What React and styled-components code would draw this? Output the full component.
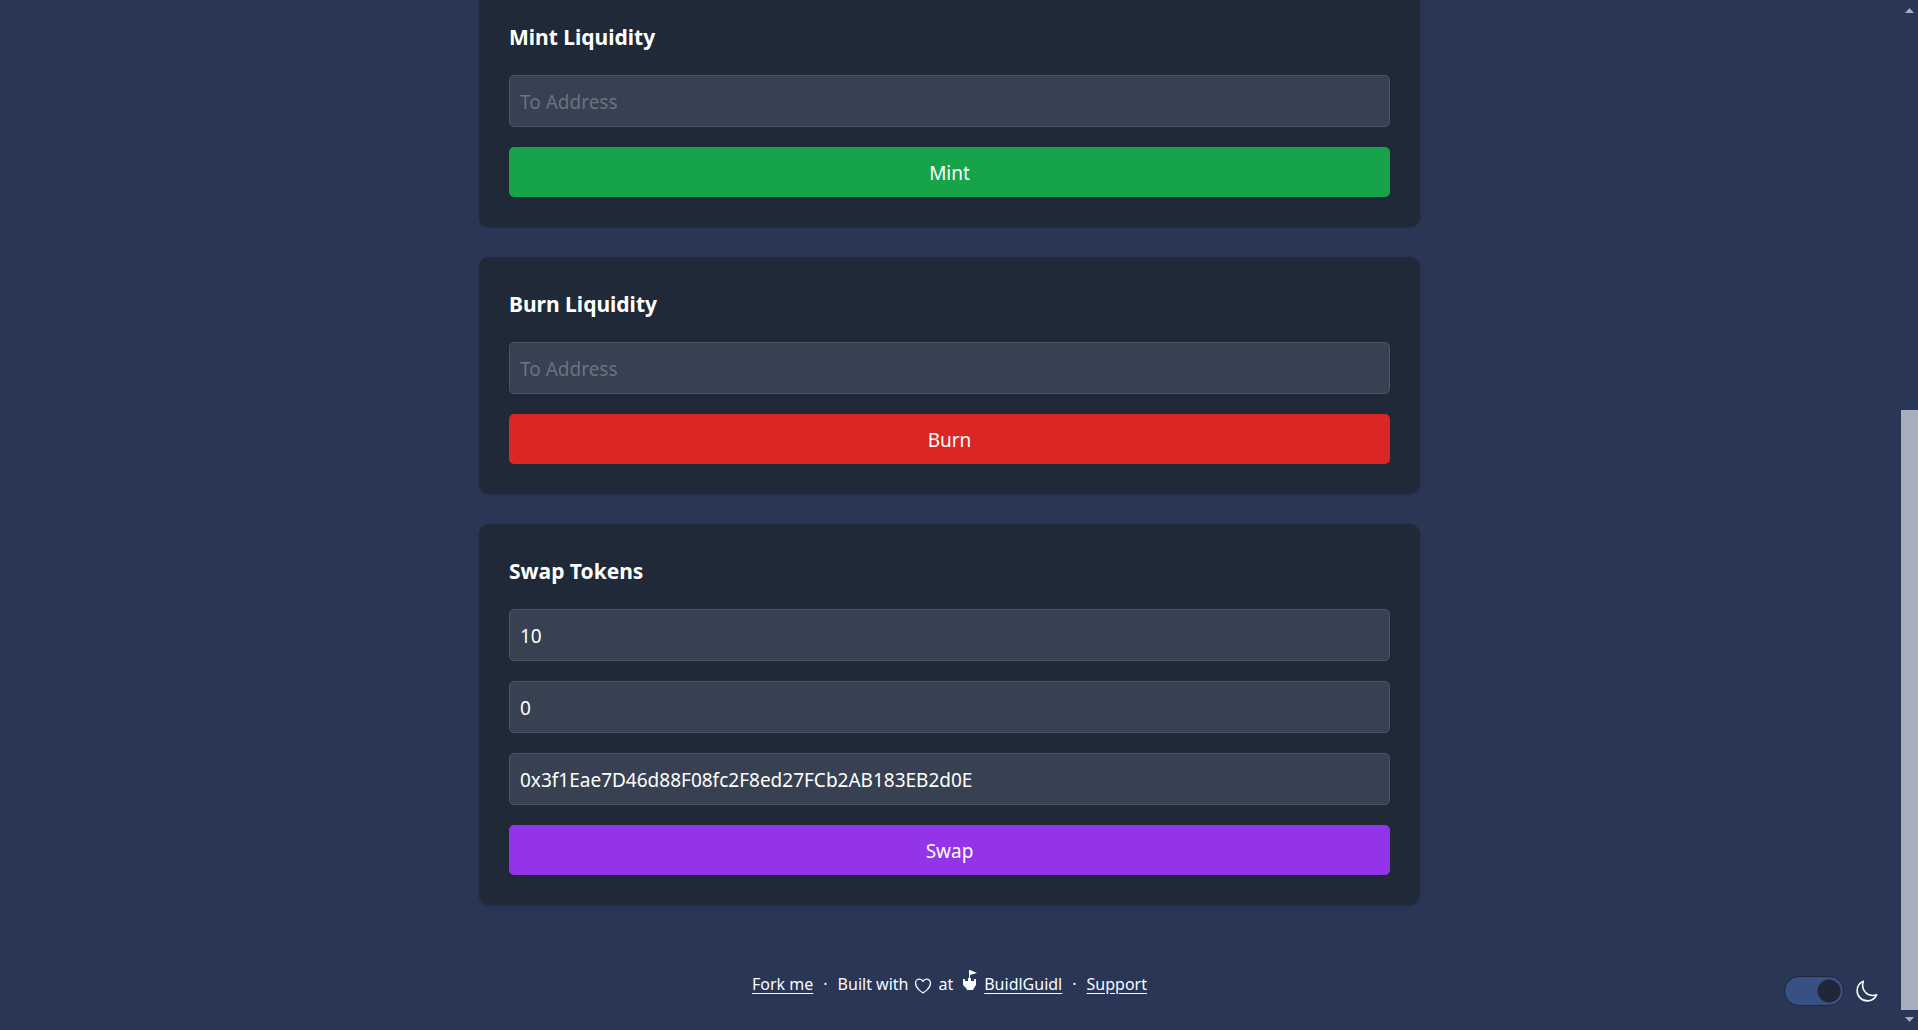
import React, { useState } from "react";
import styled, { createGlobalStyle } from "styled-components";

const GlobalStyle = createGlobalStyle`
  *, *::before, *::after { box-sizing: border-box; }
  body {
    margin: 0;
    background: #2a3655;
    color: #f9fbff;
    font-family: "Segoe UI", "Noto Sans", "Open Sans", sans-serif;
    font-size: 19px;
    line-height: 30px;
  }
`;

const Shell = styled.div`
  display: flex;
  height: 100vh;
  overflow: hidden;
`;

const Page = styled.div`
  flex: 1;
  min-width: 0;
  display: flex;
  flex-direction: column;
  justify-content: flex-end;
  align-items: center;
  overflow: hidden;
`;

const Cards = styled.main`
  width: 100%;
  max-width: 941px;
  display: flex;
  flex-direction: column;
  flex-shrink: 0;
  gap: 30px;
`;

const Card = styled.form`
  display: flex;
  flex-direction: column;
  gap: 20px;
  padding: 30px;
  border-radius: 10px;
  background: #1f2937;
  box-shadow: 0 1px 3px rgba(0, 0, 0, 0.1), 0 1px 2px -1px rgba(0, 0, 0, 0.1);
`;

const CardTitle = styled.h2`
  margin: 0;
  color: #fff;
  font-size: 21px;
  font-weight: 700;
  line-height: 35px;
`;

const Field = styled.input`
  width: 100%;
  height: 52px;
  padding: 2px 10px 0;
  border: 1px solid #4b5563;
  border-radius: 5px;
  background: #374151;
  color: #fff;
  font: inherit;
  outline: none;
  &::placeholder {
    color: #6b7280;
    opacity: 1;
  }
  &:focus { border-color: #6b7280; }
`;

const Action = styled.button`
  height: 50px;
  padding: 2px 20px 0;
  border: 0;
  border-radius: 5px;
  background: ${(p) => p.$color};
  color: #fff;
  font: inherit;
  cursor: pointer;
`;

const Footer = styled.footer`
  flex-shrink: 0;
  display: flex;
  align-items: center;
  justify-content: center;
  gap: 10px;
  padding: 65px 0 32px;
  font-size: 16px;
  line-height: 25px;
`;

const FooterLink = styled.a`
  color: inherit;
  text-decoration: underline;
  text-underline-offset: 3px;
`;

const Credit = styled.div`
  display: flex;
  align-items: center;
  gap: 5px;
`;

const BuilderLink = styled(FooterLink)`
  margin-left: 2px;
`;

const HeartMark = styled.svg`
  width: 20px;
  height: 20px;
  margin-top: 4px;
`;

const ThemeSwitch = styled.div`
  position: fixed;
  right: 39px;
  bottom: 24px;
  display: flex;
  align-items: center;
  gap: 10px;
`;

const Toggle = styled.input`
  appearance: none;
  width: 60px;
  height: 30px;
  margin: 0;
  border: 1px solid #212638;
  border-radius: 15px;
  background:
    radial-gradient(circle at ${(p) => (p.checked ? "44px" : "14px")} 14px, #212638 11px, transparent 12px),
    #385183;
  cursor: pointer;
`;

const MoonLabel = styled.label`
  display: flex;
  cursor: pointer;
`;

const ScrollTrack = styled.div`
  width: 19px;
  padding-left: 2px;
  display: flex;
  flex-direction: column;
  align-items: center;
  color: #a6adbb;
`;

const ScrollArrow = styled.svg`
  width: 17px;
  height: 20px;
  flex-shrink: 0;
`;

const ScrollSpace = styled.div`
  flex: 390;
`;

const ScrollThumb = styled.div`
  flex: 600;
  width: 100%;
  background: #a6adbb;
`;

const HeartIcon = () => (
  <HeartMark viewBox="0 0 24 24" fill="none" stroke="currentColor" strokeWidth="1.5" strokeLinecap="round" strokeLinejoin="round" aria-hidden="true">
    <path d="M21 8.25c0-2.485-2.099-4.5-4.688-4.5-1.935 0-3.597 1.126-4.312 2.733-.715-1.607-2.377-2.733-4.313-2.733C5.1 3.75 3 5.765 3 8.25c0 7.22 9 12 9 12s9-4.78 9-12Z" />
  </HeartMark>
);

const CastleIcon = () => (
  <svg width="14" height="28" viewBox="0 0 14 28" fill="currentColor" aria-hidden="true">
    <path d="M6 0h1l7 3-7 2v3h1v3h3V9h2v6l-2 3-1 2H4l-1-2-3-3V9h2v2h3V8h1z" />
  </svg>
);

const MoonIcon = () => (
  <svg width="25" height="25" viewBox="0 0 24 24" fill="none" stroke="currentColor" strokeWidth="1.5" strokeLinecap="round" strokeLinejoin="round" aria-hidden="true">
    <path d="M21.752 15.002A9.72 9.72 0 0 1 18 15.75c-5.385 0-9.75-4.365-9.75-9.75 0-1.33.266-2.597.748-3.752A9.753 9.753 0 0 0 3 11.25C3 16.635 7.365 21 12.75 21a9.753 9.753 0 0 0 9.002-5.998Z" />
  </svg>
);

const sections = [
  { title: "Mint Liquidity", action: "Mint", color: "#16a34a", fields: [{ label: "To Address", value: "" }] },
  { title: "Burn Liquidity", action: "Burn", color: "#dc2626", fields: [{ label: "To Address", value: "" }] },
  {
    title: "Swap Tokens",
    action: "Swap",
    color: "#9333ea",
    fields: [
      { label: "Amount 0 Out", value: "10" },
      { label: "Amount 1 Out", value: "0" },
      { label: "To Address", value: "0x3f1Eae7D46d88F08fc2F8ed27FCb2AB183EB2d0E" },
    ],
  },
];

export default function App() {
  const [dark, setDark] = useState(true);

  return (
    <>
      <GlobalStyle />
      <Shell>
        <Page>
          <Cards>
            {sections.map((s) => (
              <Card key={s.title} onSubmit={(e) => e.preventDefault()}>
                <CardTitle>{s.title}</CardTitle>
                {s.fields.map((f) => (
                  <Field key={f.label} type="text" aria-label={f.label} placeholder={f.label} defaultValue={f.value} spellCheck={false} />
                ))}
                <Action type="submit" $color={s.color}>{s.action}</Action>
              </Card>
            ))}
          </Cards>
          <Footer>
            <FooterLink href="#fork">Fork me</FooterLink>
            <span>·</span>
            <Credit>
              <span>Built with</span>
              <HeartIcon />
              <span>at</span>
            </Credit>
            <Credit>
              <CastleIcon />
              <BuilderLink href="#buidlguidl">BuidlGuidl</BuilderLink>
            </Credit>
            <span>·</span>
            <FooterLink href="#support">Support</FooterLink>
          </Footer>
        </Page>
        <ScrollTrack aria-hidden="true">
          <ScrollArrow viewBox="0 0 17 20" fill="currentColor"><path d="M4 13h9L8.500 8z" /></ScrollArrow>
          <ScrollSpace />
          <ScrollThumb />
          <ScrollArrow viewBox="0 0 17 20" fill="currentColor"><path d="M4 7h9L8.500 12z" /></ScrollArrow>
        </ScrollTrack>
      </Shell>
      <ThemeSwitch>
        <Toggle id="theme" type="checkbox" role="switch" aria-label="Dark theme" checked={dark} onChange={() => setDark(!dark)} />
        <MoonLabel htmlFor="theme"><MoonIcon /></MoonLabel>
      </ThemeSwitch>
    </>
  );
}
